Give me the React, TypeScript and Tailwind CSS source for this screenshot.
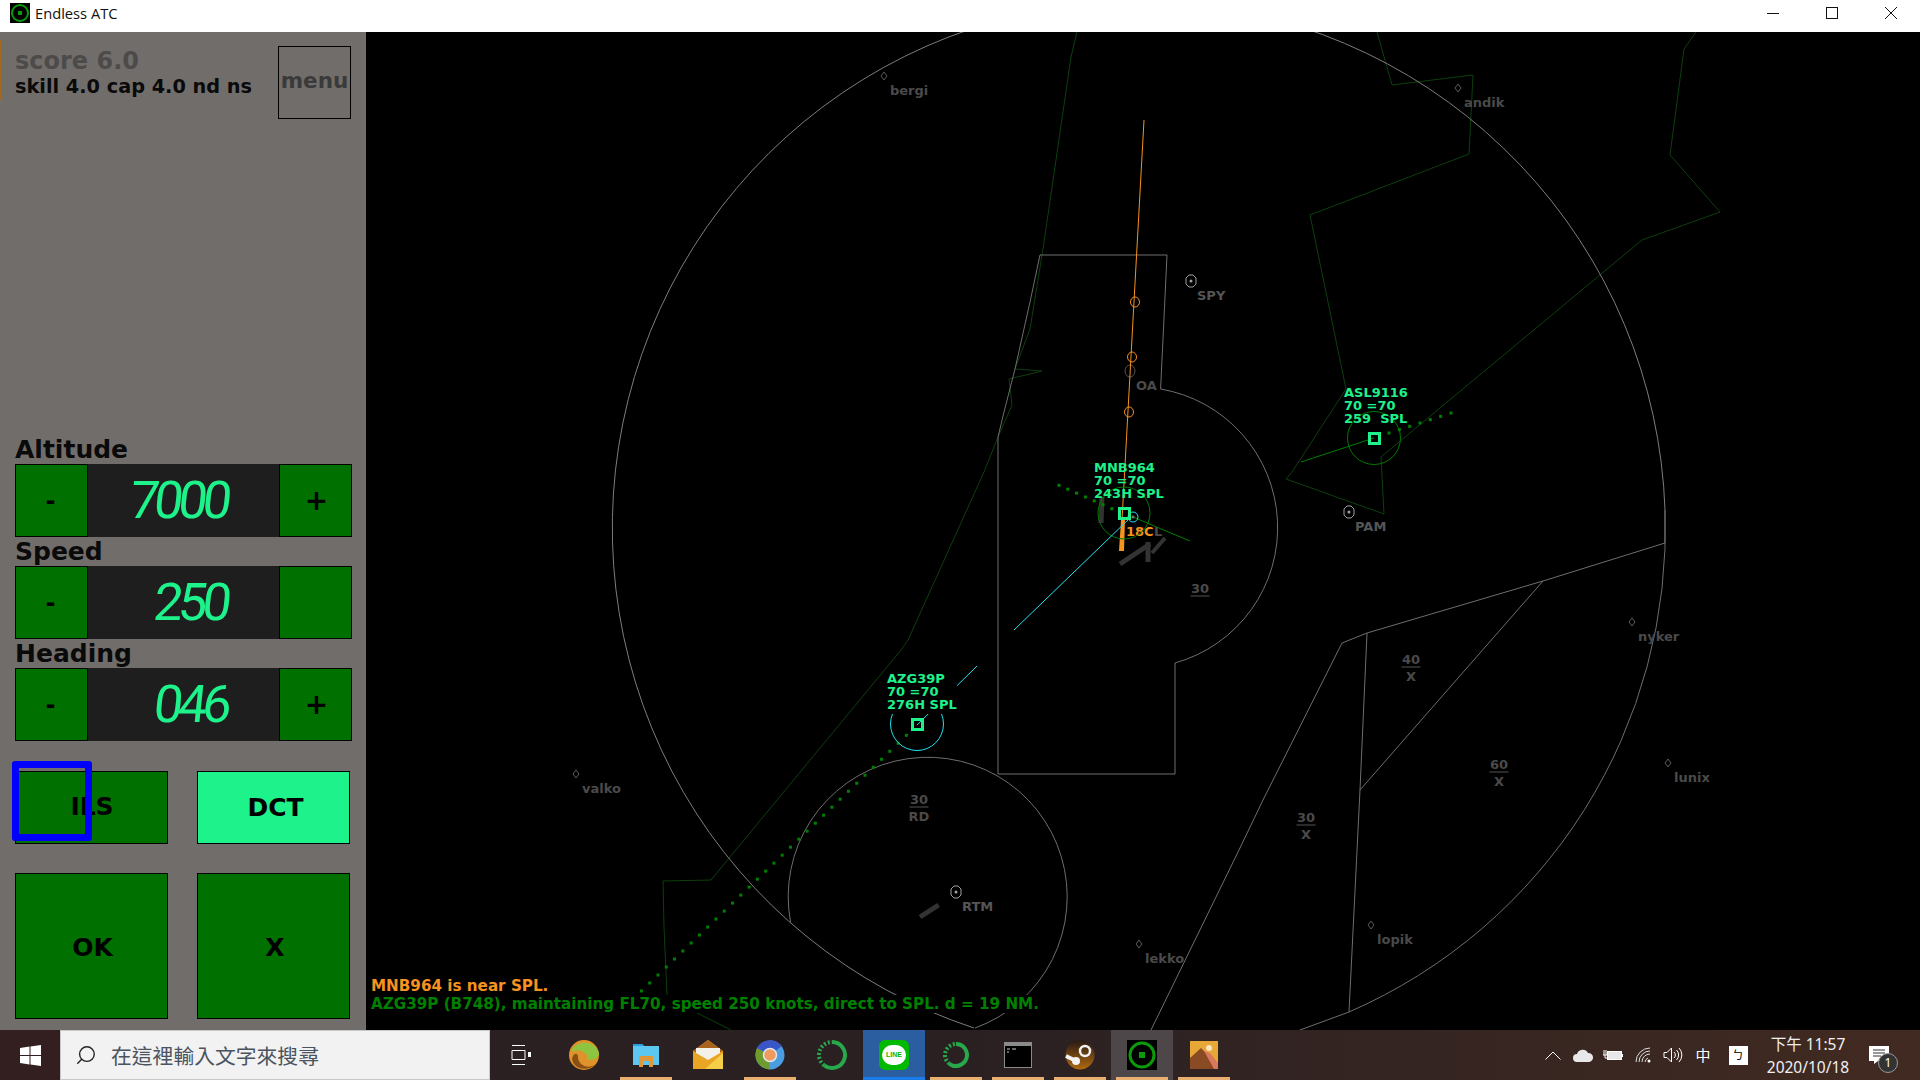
import React from "react";
import { Search } from "lucide-react";

const FONT = "font-['DejaVu_Sans',sans-serif]";

const Control = ({ label, value, plus = true }: { label: string; value: string; plus?: boolean }) => (
  <div>
    <div className="h-[29px] text-[25px] leading-[29px] font-bold text-[#0a0a0a]">{label}</div>
    <div className="flex h-[73px] w-[337px]">
      <button className="w-[73px] border border-black bg-[#007000] pr-[2px] text-[24px] font-bold text-black">-</button>
      <div className="flex w-[191px] items-center justify-end bg-[#1e1e1e] pr-[52px]">
        <span className="-skew-x-6 font-['Roboto',sans-serif] text-[52px] leading-none font-normal tracking-[-5px] text-[#1ef28a]">
          {value}
        </span>
      </div>
      <button className="w-[73px] border border-black bg-[#007000] pl-[2px] text-[28px] font-bold text-black">
        {plus ? "+" : ""}
      </button>
    </div>
  </div>
);

const Sidebar = () => (
  <aside className={`relative flex h-[998px] w-[366px] shrink-0 flex-col bg-[#716d6b] pt-[14px] pr-[15px] pb-[11px] pl-[15px] ${FONT}`}>
    <div className="absolute top-[8px] left-0 h-[60px] w-[1px] bg-[#a06a20]" />
    <div className="flex items-start justify-between">
      <div className="pt-[1px] font-bold">
        <div className="text-[24px] leading-[28px] text-[#4d4b4a]">score 6.0</div>
        <div className="text-[19.3px] leading-[24px] text-[#0a0a0a]">skill 4.0 cap 4.0 nd ns</div>
      </div>
      <button className="h-[73px] w-[73px] border border-black pb-[2px] text-[21.5px] font-bold text-[#3a3a3a]">menu</button>
    </div>

    <div className="mt-auto flex flex-col">
      <Control label="Altitude" value="7000" />
      <Control label="Speed" value="250" plus={false} />
      <Control label="Heading" value="046" />
    </div>

    <div className="mt-[30px] grid grid-cols-[153px_153px] gap-[29px]">
      <button className="relative h-[73px] border border-black bg-[#007000] pb-[1px] pl-[1px] text-[25px] font-bold text-black">
        ILS
        <span className="absolute top-[-11px] left-[-4px] h-[80px] w-[80px] rounded-[3px] border-[7px] border-[#0000ff]" />
      </button>
      <button className="h-[73px] border border-black bg-[#1ef28a] pl-[4px] text-[25px] font-bold text-black">DCT</button>
      <button className="h-[146px] border border-black bg-[#007000] pt-[3px] pl-[2px] text-[25px] font-bold text-black">OK</button>
      <button className="h-[146px] border border-black bg-[#007000] pt-[3px] pl-[3px] text-[25px] font-bold text-black">X</button>
    </div>
  </aside>
);

const waypoints = [
  { x: 884, y: 76, name: "bergi" },
  { x: 1458, y: 88, name: "andik" },
  { x: 576, y: 774, name: "valko" },
  { x: 1139, y: 944, name: "lekko" },
  { x: 1371, y: 925, name: "lopik" },
  { x: 1632, y: 622, name: "nyker" },
  { x: 1668, y: 763, name: "lunix" },
];

const beacons = [
  { x: 1191, y: 281, name: "SPY" },
  { x: 1349, y: 512, name: "PAM" },
  { x: 956, y: 892, name: "RTM" },
];

const levels = [
  { x: 1200, y: 588, top: "30", bottom: "" },
  { x: 1411, y: 659, top: "40", bottom: "X" },
  { x: 1499, y: 764, top: "60", bottom: "X" },
  { x: 1306, y: 817, top: "30", bottom: "X" },
  { x: 919, y: 799, top: "30", bottom: "RD" },
];

const darkGreen = [
  "1077,32 1071,57 1043,249 1030,329 1015,369 1042,371 1009,379 1012,405 998,437 984,472 908,640 901,650 711,880 663,881 664,927 667,995",
  "1377,32 1392,85 1473,75 1469,154 1310,215 1346,389 1292,472 1286,479 1384,514 1381,457 1642,240 1720,212 1670,155 1684,49 1696,32",
  "697,1013 731,1030",
];

const greyLines = [
  "1160.6,389 1167,255 1040,255 1030,302 1015,369 1004,412 998,437 998,774 1175,774 1175,663",
  "1665,510 1665,543 1543,581 1367,633 1342,643 1263,800 1239,850 1151,1030",
  "1367,633 1360,790 1349,1012 1300,1030",
  "1543,581 1360,790",
];

// trail dots behind each aircraft
const azgDots = Array.from({ length: 33 }, (_, i) => [906.4 - i * 8.28, 735.3 + i * 7.99]);
const mnbDots = Array.from({ length: 7 }, (_, i) => [1059 + i * 8.8, 485.3 + i * 3.9]);
const aslDots = Array.from({ length: 7 }, (_, i) => [1389 + i * 10.33, 433 - i * 3.33]);

const Plane = ({ x, y, lines }: { x: number; y: number; lines: string[] }) => (
  <g>
    {lines.map((l, i) => (
      <text key={i} x={x} y={y + i * 13} className="fill-[#1ef28a] text-[13px] font-bold" xmlSpace="preserve">
        {l}
      </text>
    ))}
  </g>
);

const Radar = () => (
  <main className={`relative h-[998px] flex-1 overflow-hidden bg-black ${FONT}`}>
    <svg width="1554" height="998" viewBox="366 32 1554 998" fill="none" className="block">
      {darkGreen.map((p) => (
        <polyline key={p} points={p} stroke="#0d3f0d" />
      ))}

      {/* scope limit and approach sectors */}
      <path d="M974 1028 A526.5 526.5 0 1 1 1665 510" stroke="#7d7d7d" />
      <path d="M1665 510 A526.5 526.5 0 0 1 1349 1012" stroke="#6e6e6e" />
      <path d="M1160.6 389 A140.6 140.6 0 0 1 1175 663" stroke="#6e6e6e" />
      <path d="M975 1028 A139.5 139.5 0 1 0 790.5 922" stroke="#6e6e6e" />
      {greyLines.map((p) => (
        <polyline key={p} points={p} stroke="#6e6e6e" />
      ))}
      <ellipse cx="1130" cy="371" rx="5" ry="6" stroke="#555" />
      <text x="1136" y="385" dominantBaseline="central" className="fill-[#4a4a4a] text-[13px] font-bold">OA</text>

      {/* runways */}
      <g stroke="#333">
        <line x1="920" y1="917" x2="938.6" y2="905" strokeWidth="5" />
        <line x1="1102" y1="497" x2="1101" y2="523" strokeWidth="5" />
        <line x1="1120" y1="564" x2="1150" y2="544" strokeWidth="5" />
        <line x1="1148" y1="542" x2="1148" y2="562" strokeWidth="5" />
        <line x1="1152" y1="553" x2="1165" y2="538" strokeWidth="4" />
      </g>
      <polygon points="1121,520 1125,520 1124,551 1119,551" fill="#f6921e" />
      <polyline points="1144,120 1122,520" stroke="#f6921e" />
      {[[1135, 302], [1132, 357], [1129, 412]].map(([x, y]) => (
        <ellipse key={y} cx={x} cy={y} rx="4.5" ry="5" stroke="#f6921e" />
      ))}
      <text x="1126" y="531" dominantBaseline="central" className="fill-[#f6921e] text-[13px] font-bold">18C</text>
      <text x="1154" y="531" dominantBaseline="central" className="fill-[#4a4a4a] text-[13px] font-bold">L</text>

      {waypoints.map((w) => (
        <g key={w.name}>
          <polygon points={`${w.x - 3},${w.y} ${w.x},${w.y - 4} ${w.x + 3},${w.y} ${w.x},${w.y + 4}`} stroke="#5a5a5a" />
          <text x={w.x + 6} y={w.y + 14} dominantBaseline="central" className="fill-[#4a4a4a] text-[13px] font-bold">
            {w.name}
          </text>
        </g>
      ))}
      {beacons.map((b) => (
        <g key={b.name}>
          <polygon
            points={`${b.x - 5},${b.y - 3} ${b.x - 2},${b.y - 6} ${b.x + 2},${b.y - 6} ${b.x + 5},${b.y - 3} ${b.x + 5},${b.y + 3} ${b.x + 2},${b.y + 6} ${b.x - 2},${b.y + 6} ${b.x - 5},${b.y + 3}`}
            stroke="#a0a0a0"
          />
          <circle cx={b.x} cy={b.y} r="1.5" fill="#a0a0a0" />
          <text x={b.x + 6} y={b.y + 14} dominantBaseline="central" className="fill-[#555] text-[13px] font-bold">
            {b.name}
          </text>
        </g>
      ))}
      {levels.map((l) => (
        <g key={`${l.x}${l.y}`} className="fill-[#4a4a4a] text-[13px] font-bold">
          <text x={l.x} y={l.y} textAnchor="middle" dominantBaseline="central">{l.top}</text>
          <line x1={l.x - 9.5} y1={l.y + 8} x2={l.x + 9.5} y2={l.y + 8} stroke="#555" />
          {l.bottom && (
            <text x={l.x} y={l.y + 17.5} textAnchor="middle" dominantBaseline="central">{l.bottom}</text>
          )}
        </g>
      ))}

      {/* traffic */}
      {[...azgDots, ...mnbDots, ...aslDots].map(([x, y], i) => (
        <rect key={i} x={x - 1.5} y={y - 1.5} width="3" height="3" fill="#008000" />
      ))}

      <circle cx="1124" cy="513" r="26" stroke="#007a00" />
      <polyline points="1133,517 1145,522 1154,526 1190,541" stroke="#008000" />
      <line x1="1014" y1="630" x2="1130" y2="518" stroke="#22dff0" />
      <circle cx="1133" cy="517" r="5" stroke="#22dff0" />
      <circle cx="1133" cy="517" r="1.5" fill="#777" />
      <rect x="1119.5" y="508.5" width="10" height="10" stroke="#1ef28a" strokeWidth="3" />
      <Plane x={1094} y={472} lines={["MNB964", "70 =70", "243H SPL"]} />

      <circle cx="917" cy="724" r="26.5" stroke="#22dff0" />
      <line x1="977" y1="666" x2="917" y2="725" stroke="#22dff0" />
      <rect x="887" y="672" width="70" height="42" fill="#000" />
      <rect x="912.5" y="719.5" width="10" height="10" stroke="#1ef28a" strokeWidth="3" />
      <Plane x={887} y={683} lines={["AZG39P", "70 =70", "276H SPL"]} />

      <circle cx="1374" cy="438" r="26.5" stroke="#007a00" />
      <line x1="1301" y1="462" x2="1374" y2="438" stroke="#008000" />
      <rect x="1369.5" y="433.5" width="10" height="10" stroke="#1ef28a" strokeWidth="3" />
      <Plane x={1344} y={397} lines={["ASL9116", "70 =70", "259  SPL"]} />
    </svg>

    <div className="absolute top-[945px] left-[5px] flex origin-left scale-x-[0.948] flex-col items-start text-[16px] leading-[18px] font-bold">
      <span className="bg-black text-[#f6921e]">MNB964 is near SPL.</span>
      <span className="bg-black text-[#008000]">AZG39P (B748), maintaining FL70, speed 250 knots, direct to SPL. d = 19 NM.</span>
    </div>
  </main>
);

const AtcIcon = ({ size }: { size: number }) => (
  <svg width={size} height={size} viewBox="0 0 20 20">
    <rect width="20" height="20" fill="#000" />
    <circle cx="10" cy="10" r="8" fill="none" stroke="#0a9a0a" strokeWidth="2" />
    <rect x="8" y="8" width="4" height="4" fill="#0a9a0a" />
  </svg>
);

const RingIcon = ({ r = 12 }: { r?: number }) => (
  <svg width="32" height="32" viewBox="0 0 32 32" fill="none">
    <path d={`M16 ${16 - r} A${r} ${r} 0 1 1 ${16 - r * 0.6} ${16 + r * 0.8}`} stroke="#27a84a" strokeWidth="4" />
    <path d={`M${16 - r * 0.6} ${16 + r * 0.8} A${r} ${r} 0 0 1 16 ${16 - r}`} stroke="#27a84a" strokeWidth="4" strokeDasharray="2 2" />
  </svg>
);

const apps: { icon: React.ReactNode; line?: boolean; bg?: string }[] = [
  {
    icon: (
      <svg width="32" height="32" viewBox="0 0 32 32">
        <circle cx="16" cy="16" r="15" fill="#e0932a" />
        <path d="M3 13 C6 2 26 -1 31 14 C31 20 24 22 19 20 C21 14 12 9 3 13Z" fill="#8fc440" />
        <path d="M10 18 C10 26 20 31 28 25 C22 32 6 32 4 20 C5 14 10 13 10 18Z" fill="#8a4f14" />
      </svg>
    ),
  },
  {
    line: true,
    icon: (
      <svg width="28" height="28" viewBox="0 0 28 28">
        <path d="M1 3 H10 L12 5 H27 V24 H1Z" fill="#5cc8f2" />
        <path d="M1 3 H10 L12 5 H1Z" fill="#2b9fdc" />
        <path d="M7 15 H21 V26 H17 V20 H11 V26 H7Z" fill="#e0983a" />
      </svg>
    ),
  },
  {
    icon: (
      <svg width="30" height="30" viewBox="0 0 30 30">
        <path d="M0 11 L15 0 L30 11 V29 H0Z" fill="#e9a524" />
        <path d="M0 11 L15 0 L30 11 L15 18Z" fill="#a8621c" />
        <path d="M3 8 H27 V13 L15 20 L3 13Z" fill="#f4f1e8" />
        <path d="M30 13 V29 H12Z" fill="#f5cf4a" />
      </svg>
    ),
  },
  {
    line: true,
    icon: (
      <svg width="30" height="30" viewBox="0 0 30 30">
        <circle cx="15" cy="15" r="14.5" fill="#4a9de0" />
        <path d="M15 15 L2 8 A15 15 0 0 0 14 29.5Z" fill="#6f9a2c" />
        <path d="M15 15 L2 8 A15 15 0 0 1 27 6Z" fill="#3a55c8" />
        <circle cx="15" cy="15" r="6.5" fill="#f09a60" stroke="#dfe6ee" strokeWidth="1.5" />
      </svg>
    ),
  },
  { icon: <RingIcon r={13} /> },
  {
    bg: "bg-[#2a5ea0]",
    icon: (
      <div className="relative flex h-[30px] w-[30px] items-center justify-center rounded-[6px] bg-[#00b900]">
        <div className="flex h-[20px] w-[24px] items-center justify-center rounded-full bg-white font-['Liberation_Sans',sans-serif] text-[7px] font-bold text-[#00b900]">
          LINE
        </div>
      </div>
    ),
  },
  { line: true, icon: <RingIcon r={11} /> },
  {
    line: true,
    icon: (
      <svg width="28" height="26" viewBox="0 0 28 26">
        <rect x="0.5" y="0.5" width="27" height="25" fill="#000" stroke="#8a8a8a" />
        <rect x="1" y="1" width="26" height="3" fill="#8a8a8a" />
        <path d="M3 7 H6 M8 7 H12 M3 10 H5" stroke="#ccc" />
      </svg>
    ),
  },
  {
    line: true,
    icon: (
      <svg width="30" height="30" viewBox="0 0 30 30">
        <defs>
          <linearGradient id="steam" x1="0" y1="0" x2="0" y2="1">
            <stop offset="0" stopColor="#2a1a14" />
            <stop offset="1" stopColor="#b06a10" />
          </linearGradient>
        </defs>
        <circle cx="15" cy="15" r="14.5" fill="url(#steam)" />
        <circle cx="20" cy="11" r="5" fill="none" stroke="#f2f2f2" strokeWidth="2.5" />
        <path d="M1 16 L11 21" stroke="#f2f2f2" strokeWidth="4" />
        <circle cx="11" cy="21" r="4" fill="#f2f2f2" />
      </svg>
    ),
  },
  { line: true, bg: "bg-[#4d474a]", icon: <AtcIcon size={30} /> },
  {
    line: true,
    icon: (
      <svg width="28" height="28" viewBox="0 0 28 28">
        <rect width="28" height="28" fill="#e8a838" />
        <circle cx="19" cy="7" r="3" fill="#fbe6c0" />
        <path d="M0 28 V17 L11 7 L28 24 V28Z" fill="#8a4a24" />
        <path d="M14 10 L20 12 L28 22 V28 H24Z" fill="#d9785a" />
      </svg>
    ),
  },
];

const Taskbar = () => (
  <footer className="flex h-[50px] items-stretch bg-linear-to-r from-[#2c2021] via-[#2a2022] to-[#412a21]">
    <div className="flex w-[60px] items-center justify-center bg-[#331f1f]">
      <svg width="21" height="21" viewBox="0 0 21 21" fill="#fff">
        <path d="M0 3 L9.5 1.6 V10 H0Z M10.5 1.4 L21 0 V10 H10.5Z M0 11 H9.5 V19.4 L0 18Z M10.5 11 H21 V21 L10.5 19.6Z" />
      </svg>
    </div>
    <div className="flex w-[430px] items-center gap-[14px] border border-[#c8c8c8] bg-[#f2f2f2] pl-[14px]">
      <Search size={22} strokeWidth={1.5} className="-scale-x-100 text-[#222]" />
      <span className="font-['Noto_Sans_CJK_TC',sans-serif] text-[20.8px] leading-none text-[#4a5360]">在這裡輸入文字來搜尋</span>
    </div>
    <div className="flex w-[63px] items-center justify-center pr-[2px]">
      <svg width="20" height="20" viewBox="0 0 20 20" fill="none" stroke="#fff">
        <path d="M1 .5 H14 M1 19.5 H14 M1 5.5 H14 V14.5 H1Z" />
        <rect x="17" y="7" width="3" height="5" fill="#fff" stroke="none" />
      </svg>
    </div>
    {apps.map((a, i) => (
      <div key={i} className={`relative flex w-[62px] items-center justify-center ${a.bg ?? ""}`}>
        {a.icon}
        {a.line && <div className="absolute right-[5px] bottom-0 left-[5px] h-[3px] bg-[#e8b070]" />}
        {a.bg === "bg-[#2a5ea0]" && <div className="absolute right-0 bottom-0 left-0 h-[3px] bg-[#1a7ae8]" />}
      </div>
    ))}
    <div className="ml-auto flex items-center pr-[20px] text-white">
      <div className="flex w-[30px] justify-center">
        <svg width="16" height="9" viewBox="0 0 16 9" fill="none" stroke="#fff"><path d="M.5 8.5 L8 1 L15.5 8.5" /></svg>
      </div>
      <div className="flex w-[30px] justify-center">
        <svg width="20" height="13" viewBox="0 0 20 13" fill="#e8e8e8"><path d="M4 13 A4 4 0 0 1 4 5 A6 6 0 0 1 15 4 A4.5 4.5 0 0 1 16 13Z" /></svg>
      </div>
      <div className="flex w-[30px] justify-center">
        <svg width="20" height="14" viewBox="0 0 20 14" fill="none" stroke="#fff"><rect x="4.5" y="3.5" width="14" height="8" fill="#e8e8e8" /><path d="M1 2 V7 M3 2 V7 M0 7 H4 M2 7 V10 H4 M19.5 6 V9" /></svg>
      </div>
      <div className="flex w-[30px] justify-center">
        <svg width="16" height="16" viewBox="0 0 16 16" fill="none" stroke="#ddd"><path d="M1 15 A14 14 0 0 1 15 1 M4 15 A11 11 0 0 1 15 4 M7 15 A8 8 0 0 1 15 7 M10 15 A5 5 0 0 1 13 11" /><circle cx="14" cy="14" r="1.5" fill="#fff" stroke="none" /></svg>
      </div>
      <div className="flex w-[30px] justify-center">
        <svg width="20" height="16" viewBox="0 0 20 16" fill="none" stroke="#fff"><path d="M1 5.5 H4 L8.5 1 V15 L4 10.5 H1Z M11 5 A4 4 0 0 1 11 11 M13.5 3 A7 7 0 0 1 13.5 13 M16 1 A10 10 0 0 1 16 15" /></svg>
      </div>
      <div className="w-[30px] text-center font-['Noto_Sans_CJK_TC',sans-serif] text-[15px]">中</div>
      <div className="flex w-[40px] justify-center">
        <div className="flex h-[19px] w-[19px] items-center justify-center bg-white font-['Noto_Sans_CJK_TC',sans-serif] text-[12px] leading-none text-black">ㄅ</div>
      </div>
      <div className="flex w-[100px] flex-col items-center pt-[1px] font-['Noto_Sans','Noto_Sans_CJK_TC',sans-serif] text-[15.5px] leading-[23px] text-[#f0f0f0]">
        <span>下午 11:57</span>
        <span>2020/10/18</span>
      </div>
      <div className="relative flex w-[42px] justify-center">
        <svg width="20" height="18" viewBox="0 0 20 18" fill="#fff"><path d="M0 0 H20 V15 H9 L5 18 V15 H0Z" /><path d="M4 4 H16 M4 7 H16 M4 10 H12" stroke="#333" /></svg>
        <div className="absolute top-[7px] left-[20px] flex h-[20px] w-[20px] items-center justify-center rounded-full border border-[#999] bg-[#333] font-['Noto_Sans',sans-serif] text-[12px] leading-none text-white">1</div>
      </div>
    </div>
  </footer>
);

const TitleBar = () => (
  <header className="flex h-[32px] items-start justify-between bg-white pl-[10px]">
    <div className="flex items-center gap-[5px] pt-[3px]">
      <AtcIcon size={20} />
      <span className="font-['Open_Sans',sans-serif] text-[14.7px] leading-[20px] text-[#111]">Endless ATC</span>
    </div>
    <div className="flex h-[25px]">
      <div className="flex w-[59px] items-center justify-center">
        <svg width="12" height="12" viewBox="0 0 12 12" stroke="#111"><path d="M0 6.5 H12" /></svg>
      </div>
      <div className="flex w-[59px] items-center justify-center">
        <svg width="12" height="12" viewBox="0 0 12 12" fill="none" stroke="#111"><rect x=".5" y=".5" width="11" height="11" /></svg>
      </div>
      <div className="flex w-[59px] items-center justify-center">
        <svg width="12" height="12" viewBox="0 0 12 12" stroke="#111"><path d="M0 0 L12 12 M12 0 L0 12" /></svg>
      </div>
    </div>
  </header>
);

export default function App() {
  return (
    <div className="flex h-[1080px] w-[1920px] flex-col overflow-hidden bg-black">
      <TitleBar />
      <div className="flex">
        <Sidebar />
        <Radar />
      </div>
      <Taskbar />
    </div>
  );
}
